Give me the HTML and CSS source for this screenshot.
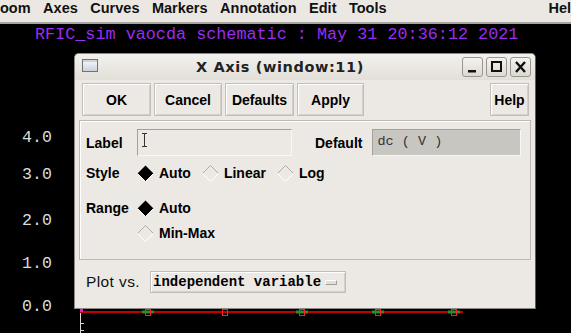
FILE: index.html
```html
<!DOCTYPE html>
<html lang="en">
<head>
    <meta charset="UTF-8">
    <title>X Axis</title>
    <link rel="stylesheet" href="styles.css">
</head>
<body>
    
    <div class="menubar">
        <span class="menu-item">oom</span>
        <span class="menu-item">Axes</span>
        <span class="menu-item">Curves</span>
        <span class="menu-item">Markers</span>
        <span class="menu-item">Annotation</span>
        <span class="menu-item">Edit</span>
        <span class="menu-item">Tools</span>
        <span class="menu-item help">Hel</span>
    </div>

    <!-- Graph area -->
    <div class="graph">
        <div class="graph-title">RFIC_sim vaocda schematic : May 31 20:36:12 2021</div>
        <div class="graph-body">
            <div class="y-labels">
                <span>4.0</span>
                <span>3.0</span>
                <span>2.0</span>
                <span>1.0</span>
                <span>0.0</span>
            </div>
            <div class="plot">
                <svg width="492" height="28" viewBox="0 0 492 28">
                    <line x1="1" y1="7" x2="384" y2="7" stroke="#c00000" stroke-width="2"/>
                    <rect x="1" y="4" width="3" height="3" fill="#e020e0"/>
                    <line x1="1.5" y1="8" x2="1.5" y2="28" stroke="#d8d8d8"/>
                    <line x1="1" y1="18.5" x2="5" y2="18.5" stroke="#d8d8d8"/>
                    <line x1="1" y1="25.5" x2="5" y2="25.5" stroke="#d8d8d8"/>
                    <g transform="translate(69 0)">
                        <rect x="-6" y="5.5" width="12" height="3" fill="#2e8b2e"/>
                        <rect x="-2.5" y="4.5" width="5" height="6" fill="none" stroke="#ff2020"/>
                    </g>
                    <g transform="translate(146 0)">
                        <rect x="-2.5" y="4.5" width="5" height="6" fill="none" stroke="#ff2020"/>
                    </g>
                    <g transform="translate(223 0)">
                        <rect x="-6" y="5.5" width="12" height="3" fill="#2e8b2e"/>
                        <rect x="-2.5" y="4.5" width="5" height="6" fill="none" stroke="#ff2020"/>
                    </g>
                    <g transform="translate(299 0)">
                        <rect x="-6" y="5.5" width="12" height="3" fill="#2e8b2e"/>
                        <rect x="-2.5" y="4.5" width="5" height="6" fill="none" stroke="#ff2020"/>
                    </g>
                    <g transform="translate(375 0)">
                        <rect x="-6" y="5.5" width="12" height="3" fill="#2e8b2e"/>
                        <rect x="-2.5" y="4.5" width="5" height="6" fill="none" stroke="#ff2020"/>
                    </g>
                </svg>
            </div>
        </div>

        <!-- X Axis dialog window -->
        <div class="dialog">
            <div class="titlebar">
                <svg class="win-icon" width="16" height="13" viewBox="0 0 16 13">
                    <defs>
                        <linearGradient id="icon-fill" x1="0" y1="0" x2="0" y2="1">
                            <stop offset="0" stop-color="#fbfcfd"/>
                            <stop offset="1" stop-color="#c9d0d9"/>
                        </linearGradient>
                    </defs>
                    <rect x="0.5" y="0.5" width="15" height="12" fill="url(#icon-fill)" stroke="#727272"/>
                    <line x1="1" y1="2" x2="15" y2="2" stroke="#a9b0ba"/>
                </svg>
                <div class="title">X Axis (window:11)</div>
                <div class="win-buttons">
                    <div class="win-btn">
                        <svg width="19" height="18" viewBox="0 0 19 18"><rect x="5" y="12" width="8" height="2.5" fill="#111"/></svg>
                    </div>
                    <div class="win-btn">
                        <svg width="19" height="18" viewBox="0 0 19 18"><rect x="5" y="4" width="9" height="9" fill="none" stroke="#111" stroke-width="2"/></svg>
                    </div>
                    <div class="win-btn">
                        <svg width="19" height="18" viewBox="0 0 19 18"><path d="M5 4 L14 14 M14 4 L5 14" stroke="#111" stroke-width="2.4"/></svg>
                    </div>
                </div>
            </div>

            <div class="client">
                <div class="button-row">
                    <div class="btn btn-ok">OK</div>
                    <div class="btn btn-cancel">Cancel</div>
                    <div class="btn btn-defaults">Defaults</div>
                    <div class="btn btn-apply">Apply</div>
                    <div class="btn btn-help">Help</div>
                </div>

                <div class="frame">
                    <div class="row label-row">
                        <span class="field-label">Label</span>
                        <div class="text-input">
                            <svg width="7" height="14" viewBox="0 0 7 14"><path d="M1 0.5 H6 M3.5 0.5 V13.5 M1 13.5 H6" stroke="#333" fill="none"/></svg>
                        </div>
                        <span class="default-label">Default</span>
                        <div class="default-box">dc ( V )</div>
                    </div>

                    <div class="row style-row">
                        <span class="field-label">Style</span>
                        <div class="radio-group">
                            <div class="radio">
                                <svg width="17" height="17" viewBox="0 0 17 17"><polygon points="8.5,0.5 16.5,8.5 8.5,16.5 0.5,8.5" fill="#000"/><polyline points="16.5,8.5 8.5,16.5 0.5,8.5" fill="none" stroke="#fff"/></svg>
                                <span>Auto</span>
                            </div>
                            <div class="radio">
                                <svg width="17" height="17" viewBox="0 0 17 17"><polyline points="0.5,8.5 8.5,0.5 16.5,8.5" fill="none" stroke="#aeaba5"/><polyline points="16.5,8.5 8.5,16.5 0.5,8.5" fill="none" stroke="#fff"/></svg>
                                <span>Linear</span>
                            </div>
                            <div class="radio">
                                <svg width="17" height="17" viewBox="0 0 17 17"><polyline points="0.5,8.5 8.5,0.5 16.5,8.5" fill="none" stroke="#aeaba5"/><polyline points="16.5,8.5 8.5,16.5 0.5,8.5" fill="none" stroke="#fff"/></svg>
                                <span>Log</span>
                            </div>
                        </div>
                    </div>

                    <div class="row range-row">
                        <span class="field-label">Range</span>
                        <div class="radio-col">
                            <div class="radio">
                                <svg width="17" height="17" viewBox="0 0 17 17"><polygon points="8.5,0.5 16.5,8.5 8.5,16.5 0.5,8.5" fill="#000"/><polyline points="16.5,8.5 8.5,16.5 0.5,8.5" fill="none" stroke="#fff"/></svg>
                                <span>Auto</span>
                            </div>
                            <div class="radio">
                                <svg width="17" height="17" viewBox="0 0 17 17"><polyline points="0.5,8.5 8.5,0.5 16.5,8.5" fill="none" stroke="#aeaba5"/><polyline points="16.5,8.5 8.5,16.5 0.5,8.5" fill="none" stroke="#fff"/></svg>
                                <span>Min-Max</span>
                            </div>
                        </div>
                    </div>
                </div>

                <div class="plotvs-row">
                    <span class="plotvs-label">Plot vs.</span>
                    <div class="option-btn">
                        <span>independent variable</span>
                        <span class="option-mark"></span>
                    </div>
                </div>
            </div>
        </div>
    </div>
</body>
</html>
```

FILE: styles.css
```css
body {
    margin: 0;
    width: 571px;
    height: 333px;
    overflow: hidden;
    background: #000;
    font-family: "Liberation Sans", Arial, sans-serif;
}

/* menu bar */
.menubar {
    display: flex;
    gap: 12.5px;
    height: 22px;
    background: #ebe8e3;
    border-bottom: 2px solid #a6a39e;
    font-size: 14.5px;
    font-weight: bold;
    line-height: 16px;
    color: #111;
    white-space: nowrap;
}

.menu-item.help {
    margin-left: auto;
    margin-right: 0;
}

/* graph */
.graph {
    position: relative;
    height: 309px;
}

.graph-title {
    font-family: "Liberation Mono", monospace;
    font-size: 16.8px;
    line-height: 22px;
    color: #9c2cf2;
    padding-left: 35px;
    white-space: pre;
}

.graph-body {
    display: flex;
    height: 287px;
}

.y-labels {
    width: 79px;
    box-sizing: border-box;
    display: grid;
    grid-template-rows: 37px 46px 43.5px 42.5px 16px;
    align-content: start;
    padding-top: 83.5px;
    padding-left: 22px;
    font-family: "Liberation Mono", monospace;
    font-size: 16.6px;
    line-height: 16px;
    color: #dcdcdc;
}

.plot {
    flex: 1;
    display: flex;
    align-items: flex-end;
}

.plot svg {
    display: block;
}

/* dialog */
.dialog {
    position: absolute;
    left: 74px;
    top: 29px;
    width: 462px;
    height: 256px;
    box-sizing: border-box;
    border: 1px solid #8c8984;
    border-right-color: #5d5b57;
    border-radius: 5px 5px 0 0;
    background: #ece9e4;
    display: flex;
    flex-direction: column;
    z-index: 1;
}

.titlebar {
    height: 26px;
    display: flex;
    align-items: center;
    padding: 0 4px 0 7px;
    background: linear-gradient(#f3f1ed, #e2dfd9);
    border-radius: 4px 4px 0 0;
}

.win-icon {
    display: block;
    margin-top: -3px;
}

.title {
    flex: 1;
    text-align: center;
    font-family: "DejaVu Sans", sans-serif;
    font-weight: bold;
    font-size: 14.5px;
    letter-spacing: 0.6px;
    color: #222;
}

.win-buttons {
    display: flex;
    gap: 3px;
}

.win-btn {
    width: 21px;
    height: 20px;
    box-sizing: border-box;
    border: 1px solid #9a968f;
    border-radius: 3px;
    background: linear-gradient(#f5f3ef, #dcd9d3);
    display: flex;
    align-items: center;
    justify-content: center;
}

.win-btn svg {
    display: block;
}

.client {
    flex: 1;
    padding: 3px 4px 0 4px;
    font-size: 14px;
    font-weight: bold;
    color: #000;
}

.button-row {
    display: flex;
    gap: 3px;
    padding: 0 2px 0 3px;
}

.btn {
    height: 33px;
    box-sizing: border-box;
    border: 1px solid #c2bfb9;
    box-shadow: inset 1px 1px 0 #fff, inset -1px -1px 0 #d3d0ca;
    background: #ece9e4;
    display: flex;
    align-items: center;
    justify-content: center;
}

.btn-ok { width: 69px; }
.btn-cancel { width: 68px; }
.btn-defaults { width: 69px; }
.btn-apply { width: 67px; }

.btn-help {
    width: 39px;
    margin-left: auto;
}

.frame {
    margin-top: 4px;
    height: 140px;
    box-sizing: border-box;
    border: 1px solid #bcb9b3;
    box-shadow: inset 1px 1px 0 #fff;
    padding: 8px 0 0 6px;
}

.row {
    display: flex;
    align-items: center;
    height: 20px;
}

.field-label {
    width: 51px;
    flex-shrink: 0;
}

.label-row {
    height: 27px;
}

.text-input {
    width: 155px;
    height: 27px;
    box-sizing: border-box;
    border: 1px solid;
    border-color: #a3a09a #f8f7f5 #f8f7f5 #a3a09a;
    padding: 3px 0 0 3px;
}

.text-input svg {
    display: block;
}

.default-label {
    margin-left: 23px;
}

.default-box {
    margin-left: 10px;
    width: 149px;
    height: 27px;
    box-sizing: border-box;
    border: 1px solid;
    border-color: #a3a09a #f8f7f5 #f8f7f5 #a3a09a;
    background: #c8c6c1;
    padding: 3px 4px;
    font-family: "Liberation Mono", "Courier New", monospace;
    font-size: 13.5px;
    font-weight: normal;
    line-height: 17px;
    color: #333;
    white-space: pre;
}

.style-row {
    margin-top: 7px;
}

.range-row {
    margin-top: 15px;
    align-items: flex-start;
}

.range-row .field-label {
    line-height: 20px;
}

.radio-group {
    display: flex;
    gap: 11px;
}

.radio-col {
    display: flex;
    flex-direction: column;
    gap: 5px;
}

.radio {
    display: flex;
    align-items: center;
    gap: 5px;
    height: 20px;
}

.radio svg {
    display: block;
}

.plotvs-row {
    margin-top: 11px;
    height: 22px;
    display: flex;
    align-items: center;
    padding-left: 7px;
}

.plotvs-label {
    font-size: 15.5px;
    font-weight: normal;
    letter-spacing: 0.4px;
    color: #111;
}

.option-btn {
    margin-left: 10px;
    width: 196px;
    height: 22px;
    box-sizing: border-box;
    border: 1px solid #c2bfb9;
    box-shadow: inset 1px 1px 0 #fff, inset -1px -1px 0 #d3d0ca;
    display: flex;
    align-items: center;
    padding-left: 2px;
    font-family: "Liberation Mono", "Courier New", monospace;
    font-size: 14px;
    font-weight: bold;
}

.option-mark {
    width: 12px;
    height: 5px;
    box-sizing: border-box;
    margin-left: auto;
    margin-right: 8px;
    border: 1px solid;
    border-color: #fff #a3a09a #a3a09a #fff;
    background: #e2dfd9;
}
```
